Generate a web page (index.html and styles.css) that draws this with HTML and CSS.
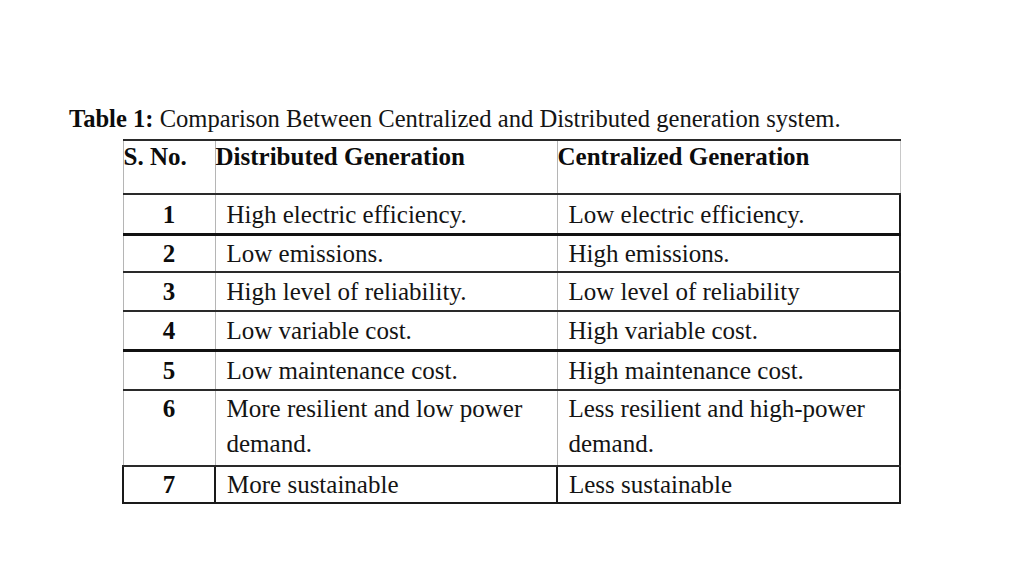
FILE: index.html
```html
<!DOCTYPE html>
<html>
<head>
<meta charset="utf-8">
<link rel="stylesheet" href="styles.css">
</head>
<body>
<div class="page">
  <p class="caption"><b>Table 1:</b> Comparison Between Centralized and Distributed generation system.</p>
  <table class="cmp">
    <colgroup>
      <col class="c1"><col class="c2"><col class="c3">
    </colgroup>
    <tr class="head">
      <th class="sno">S. No.</th>
      <th>Distributed Generation</th>
      <th class="last">Centralized Generation</th>
    </tr>
    <tr class="r1">
      <td class="num">1</td><td>High electric efficiency.</td><td class="last">Low electric efficiency.</td>
    </tr>
    <tr class="r2 thick">
      <td class="num">2</td><td>Low emissions.</td><td class="last">High emissions.</td>
    </tr>
    <tr class="r3">
      <td class="num">3</td><td>High level of reliability.</td><td class="last">Low level of reliability</td>
    </tr>
    <tr class="r4">
      <td class="num">4</td><td>Low variable cost.</td><td class="last">High variable cost.</td>
    </tr>
    <tr class="r5 thick">
      <td class="num">5</td><td>Low maintenance cost.</td><td class="last">High maintenance cost.</td>
    </tr>
    <tr class="r6">
      <td class="num">6</td><td>More resilient and low power demand.</td><td class="last">Less resilient and high-power demand.</td>
    </tr>
    <tr class="r7 dark">
      <td class="num">7</td><td>More sustainable</td><td class="last">Less sustainable</td>
    </tr>
  </table>
</div>
</body>
</html>
```

FILE: styles.css
```css
html, body {
  margin: 0;
  padding: 0;
  background: #ffffff;
}

.page {
  width: 1024px;
  height: 576px;
  box-sizing: border-box;
  padding: 100px 0 0 69px;
  font-family: "Liberation Serif", "Times New Roman", serif;
  color: #141414;
}

.caption {
  margin: 0;
  font-size: 24.6px;
  line-height: 38px;
  white-space: nowrap;
}

.caption b {
  color: #0c0c0c;
}

.cmp {
  margin: 1px 0 0 53px;
  border-collapse: collapse;
  table-layout: fixed;
  font-size: 25px;
}

.c1 { width: 92px; }
.c2 { width: 342px; }
.c3 { width: 343px; }

.cmp th,
.cmp td {
  padding: 0 0 0 11px;
  border-top: 2px solid #2a2a2a;
  border-bottom: 2px solid #2a2a2a;
  border-left: 1px solid #b5b5b5;
  border-right: 1px solid #b5b5b5;
  text-align: left;
  vertical-align: middle;
  line-height: 35px;
}

.cmp th {
  font-weight: bold;
  vertical-align: top;
  height: 52px;
  padding-top: 0;
  padding-left: 0;
  line-height: 32px;
  color: #0c0c0c;
}

.cmp th.sno {
  padding-left: 0;
}

.cmp td.num {
  text-align: center;
  font-weight: bold;
  padding-left: 0;
  color: #0c0c0c;
}

.cmp td.last {
  border-right: 2px solid #1a1a1a;
}

.head th.last {
  border-right: 1px solid #c8c8c8;
}

.r1 td { height: 38px; }
.r2 td { height: 35px; }
.r3 td { height: 37px; }
.r4 td { height: 37px; }
.r5 td { height: 37px; }
.r6 td { height: 74px; }
.r7 td { height: 35px; }

.thick td {
  border-top: 3px solid #111111;
}

.dark td {
  border-left: 2px solid #1a1a1a;
  border-right: 2px solid #1a1a1a;
  border-bottom: 2px solid #1a1a1a;
}

.r6 td {
  vertical-align: top;
}
```
